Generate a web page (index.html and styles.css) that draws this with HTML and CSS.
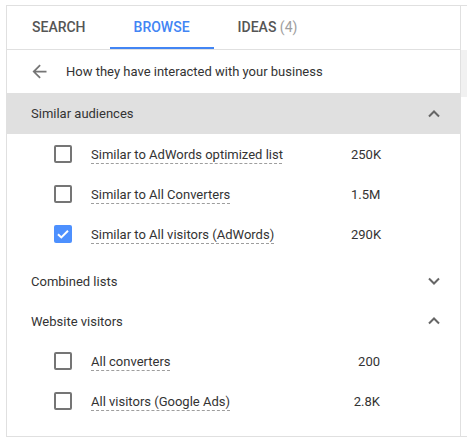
FILE: index.html
```html
<!DOCTYPE html>
<html lang="en">
<head>
    <meta charset="UTF-8">
    <title>Audiences</title>
    <link rel="stylesheet" href="styles.css">
</head>
<body>
    <div class="frame">
        <div class="panel">
            <div class="tabs">
                <div class="tab">SEARCH</div>
                <div class="tab active">BROWSE</div>
                <div class="tab">IDEAS <span class="count">(4)</span></div>
            </div>

            <div class="back-row">
                <svg class="back-icon" width="21" height="21" viewBox="0 0 24 24">
                    <path d="M20 11H7.83l5.59-5.59L12 4l-8 8 8 8 1.41-1.41L7.83 13H20v-2z" fill="#757575"/>
                </svg>
                <span>How they have interacted with your business</span>
            </div>

            <div class="section-head open">
                <span>Similar audiences</span>
                <svg class="chev" width="14" height="14" viewBox="0 0 14 14"><path d="M2 9.5 7 4.5 12 9.5" fill="none" stroke="#666" stroke-width="2"/></svg>
            </div>
            <div class="items">
                <div class="item">
                    <span class="box"></span>
                    <span class="label">Similar to AdWords optimized list</span>
                    <span class="value">250K</span>
                </div>
                <div class="item">
                    <span class="box"></span>
                    <span class="label">Similar to All Converters</span>
                    <span class="value">1.5M</span>
                </div>
                <div class="item">
                    <span class="box checked">
                        <svg width="18" height="18" viewBox="0 0 18 18"><path d="M4 9.2 7.3 12.4 14 5.8" fill="none" stroke="#fff" stroke-width="2"/></svg>
                    </span>
                    <span class="label">Similar to All visitors (AdWords)</span>
                    <span class="value">290K</span>
                </div>
            </div>

            <div class="section-head">
                <span>Combined lists</span>
                <svg class="chev" width="14" height="14" viewBox="0 0 14 14"><path d="M2 4.5 7 9.5 12 4.5" fill="none" stroke="#666" stroke-width="2"/></svg>
            </div>
            <div class="section-head">
                <span>Website visitors</span>
                <svg class="chev" width="14" height="14" viewBox="0 0 14 14"><path d="M2 9.5 7 4.5 12 9.5" fill="none" stroke="#666" stroke-width="2"/></svg>
            </div>
            <div class="items last">
                <div class="item">
                    <span class="box"></span>
                    <span class="label">All converters</span>
                    <span class="value">200</span>
                </div>
                <div class="item">
                    <span class="box"></span>
                    <span class="label">All visitors (Google Ads)</span>
                    <span class="value">2.8K</span>
                </div>
            </div>
        </div>
        <div class="side">
            <div class="scroll"></div>
        </div>
    </div>
</body>
</html>
```

FILE: styles.css
```css
body {
    margin: 0;
    font-family: Roboto, "Liberation Sans", Arial, sans-serif;
    background-color: #fff;
    color: #333;
}

.frame {
    display: flex;
    margin: 5px 0 0 6px;
    border-top: 1px solid #e0e0e0;
    border-bottom: 1px solid #e0e0e0;
}

.panel {
    width: 455px;
    border-left: 1px solid #e0e0e0;
    border-right: 1px solid #e0e0e0;
    box-sizing: border-box;
}

.side {
    flex: 1;
    padding-top: 44px;
}

.scroll {
    height: 47px;
    background-color: #f1f1f1;
}

.tabs {
    display: flex;
    height: 43px;
    border-bottom: 1px solid #e0e0e0;
    padding-left: 1px;
}

.tab {
    padding: 2px 24px 0;
    font-size: 14px;
    font-weight: 500;
    line-height: 39px;
    color: #555;
    border-bottom: 2px solid transparent;
}

.tab.active {
    color: #4285f4;
    border-bottom-color: #4285f4;
}

.count {
    color: #9e9e9e;
    font-weight: 400;
}

.back-row {
    display: flex;
    align-items: center;
    height: 43px;
    padding-left: 22px;
    font-size: 13px;
}

.back-icon {
    margin-right: 16px;
}

.section-head {
    display: flex;
    align-items: center;
    justify-content: space-between;
    height: 40px;
    padding: 0 19px 0 24px;
    font-size: 13px;
}

.back-row + .section-head {
    background-color: #e0e0e0;
    height: 41px;
}

.items {
    padding-bottom: 7px;
}

.items.last {
    padding-bottom: 15px;
}

.item {
    display: flex;
    align-items: center;
    height: 40px;
    padding-left: 47px;
    font-size: 13px;
}

.box {
    width: 18px;
    height: 18px;
    box-sizing: border-box;
    border: 2px solid #757575;
    border-radius: 2px;
    margin-right: 19px;
    flex-shrink: 0;
}

.box.checked {
    border: none;
    background-color: #4d90fe;
}

.box svg {
    display: block;
}

.label {
    width: 260px;
    text-decoration: underline dashed #9e9e9e;
    text-underline-offset: 4px;
    text-decoration-thickness: 1px;
}

.value {
    width: 29px;
    text-align: right;
    white-space: nowrap;
    margin-left: auto;
    margin-right: 80px;
}
```
